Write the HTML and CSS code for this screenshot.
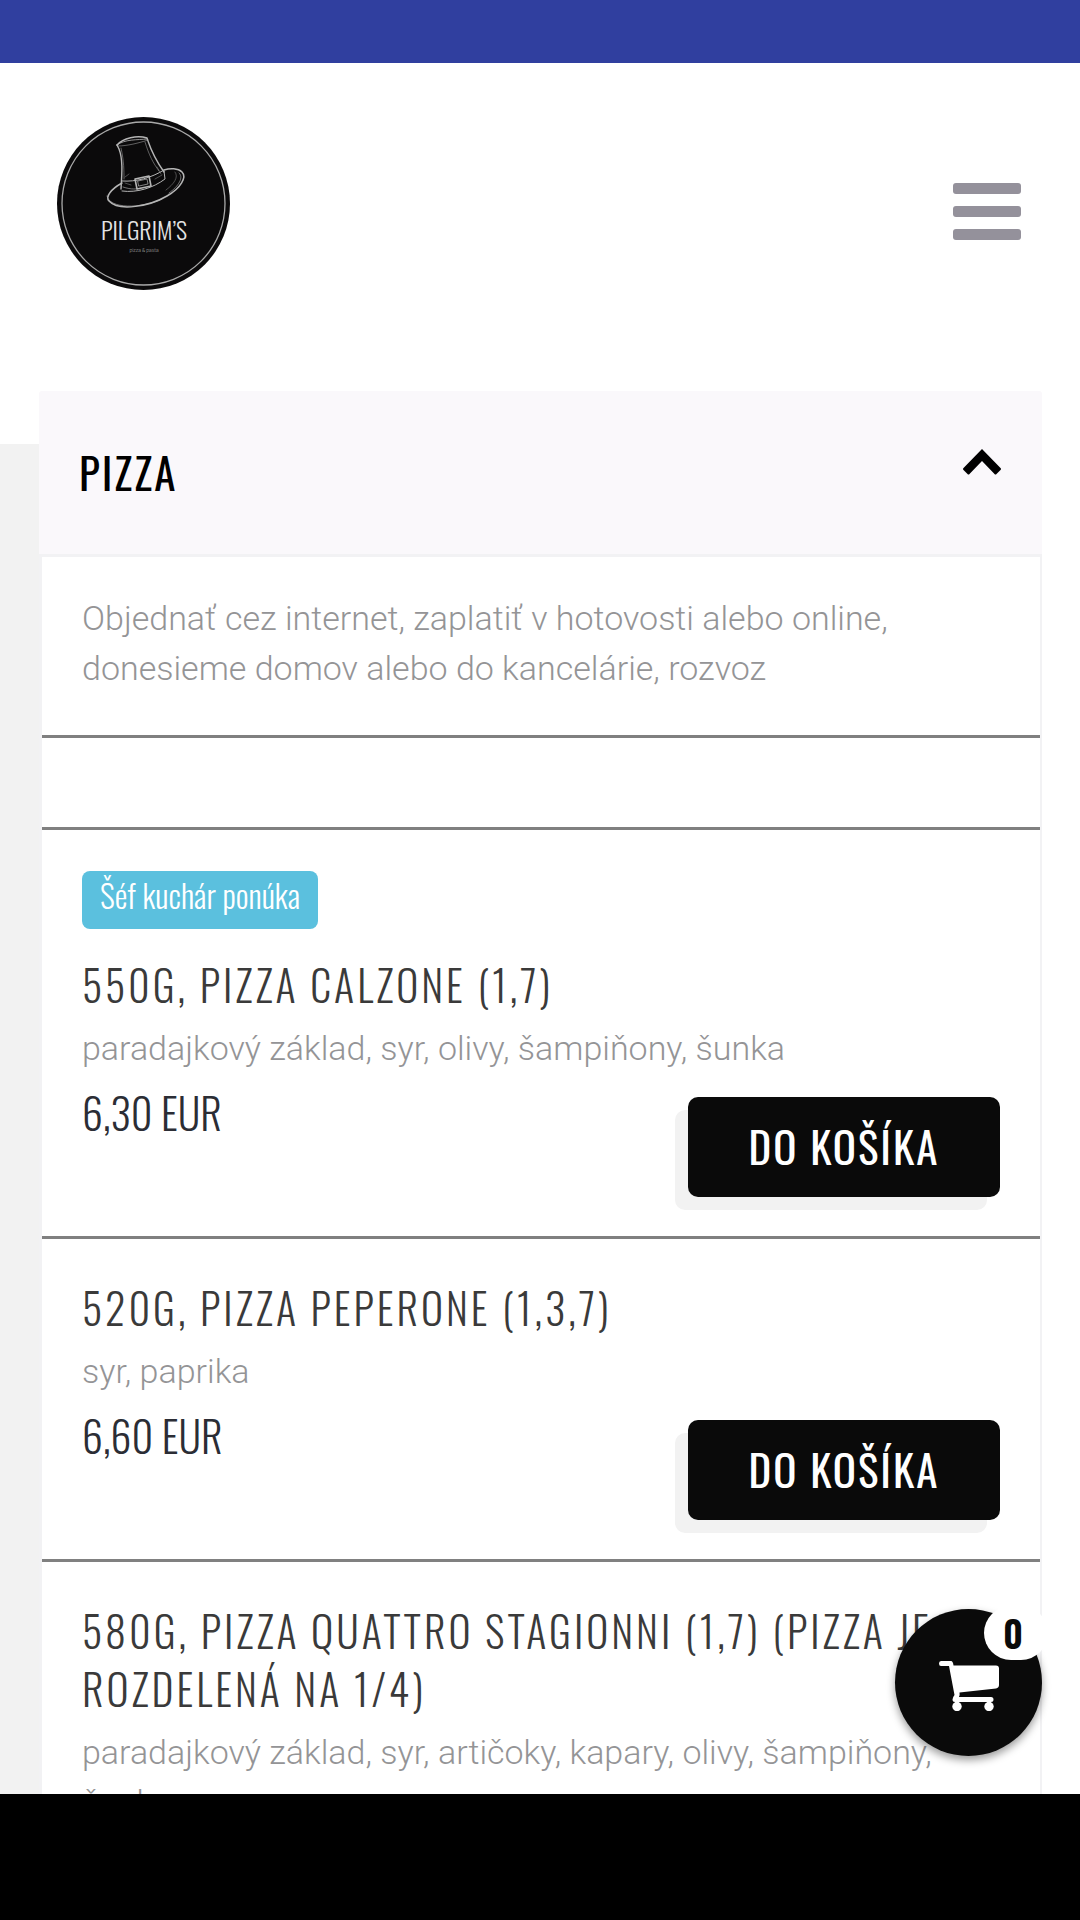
FILE: index.html
```
<!DOCTYPE html>
<html lang="sk">
<head>
    <meta charset="UTF-8">
    <meta name="viewport" content="width=device-width, initial-scale=1.0">
    <title>Pilgrim's - pizza &amp; pasta</title>
    <link rel="stylesheet" href="styles.css">
</head>
<body>

<div class="status-bar"></div>

<main class="page">
    <header class="header">
        <a href="#" class="logo" aria-label="Pilgrim's">
            <svg width="174" height="174" viewBox="0 0 174 174">
                <circle cx="86.5" cy="86.5" r="86.5" fill="#0b0a0b"/>
                <circle cx="86.5" cy="86.5" r="81.5" fill="none" stroke="#a9a9a9" stroke-width="1.3"/>
                <!-- hat -->
                <g fill="none" stroke="#b5b5b5" stroke-width="1" stroke-linecap="round" stroke-linejoin="round">
                    <path d="M60 28 C66 21 80 18 90 21 L91 24 C95 36 100 45 107 55" stroke-width="1.4"/>
                    <path d="M60 28 C68 22 80 23 90 22" opacity=".8"/>
                    <path d="M61 29 C70 29 82 26 91 23" opacity=".5"/>
                    <path d="M60 28 L62 32 C66 42 65 56 64 72" stroke-width="1.4"/>
                    <path d="M64 31 C67 44 67 54 67 62" opacity=".5"/>
                    <path d="M88 25 C92 38 96 46 102 54" opacity=".5"/>
                    <path d="M65 64 C79 65 94 61 107 53"/>
                    <path d="M65 74 C80 76 96 71 108 62 L107 54"/>
                    <path d="M66 70 C75 73 80 72 84 71" opacity=".6"/>
                    <path d="M78 62 L92 59 L94 69 L80 72 Z" stroke-width="1.6"/>
                    <path d="M81 64 L90 62 L91 67 L82 69 Z" opacity=".7"/>
                    <path d="M65 66 C54 72 48 80 52 84 C62 95 93 89 110 79 C124 71 130 60 125 55 C121 51 113 51 107 53" stroke-width="1.5"/>
                    <path d="M50 79 C52 92 84 92 105 82" opacity=".6"/>
                    <path d="M122 56 C127 60 122 69 112 76" opacity=".6"/>
                    <path d="M118 55 C122 60 117 67 109 73" opacity=".4"/>
                    <path d="M68 60 L72 57 M100 50 L104 57 M68 66 L74 68 M98 62 L105 58" opacity=".4"/>
                </g>
                <text x="87" y="123" class="logo-name">PILGRIM’S</text>
                <text x="87" y="135" class="logo-sub">pizza &amp; pasta</text>
            </svg>
        </a>
        <button class="menu-toggle" type="button" aria-label="Menu">
            <span class="bar"></span>
            <span class="bar"></span>
            <span class="bar"></span>
        </button>
    </header>

    <section class="offer">
        <div class="category">
            <button class="category-header" type="button">
                <span>PIZZA</span>
                <svg class="chevron" width="38" height="26" viewBox="0 0 38 26">
                    <path d="M19 0 L37.500 19 Q38.500 20 37.500 21 L33.500 25 Q32.500 26 31.500 25 L19 12 L6.500 25 Q5.500 26 4.500 25 L0.500 21 Q-0.500 20 0.500 19 Z"/>
                </svg>
            </button>

            <div class="category-body">
                <p class="intro">Objednať cez internet, zaplatiť v hotovosti alebo online, donesieme domov alebo do kancelárie, rozvoz</p>
                <div class="spacer"></div>

                <article class="item">
                    <span class="label">Šéf kuchár ponúka</span>
                    <h3>550G, PIZZA CALZONE (1,7)</h3>
                    <p class="desc">paradajkový základ, syr, olivy, šampiňony, šunka</p>
                    <div class="buy">
                        <span class="price">6,30 EUR</span>
                        <button class="btn" type="button">DO KOŠÍKA</button>
                    </div>
                </article>

                <article class="item">
                    <h3>520G, PIZZA PEPERONE (1,3,7)</h3>
                    <p class="desc">syr, paprika</p>
                    <div class="buy">
                        <span class="price">6,60 EUR</span>
                        <button class="btn" type="button">DO KOŠÍKA</button>
                    </div>
                </article>

                <article class="item">
                    <h3>580G, PIZZA QUATTRO STAGIONNI (1,7) (PIZZA JE ROZDELENÁ NA 1/4)</h3>
                    <p class="desc">paradajkový základ, syr, artičoky, kapary, olivy, šampiňony, šunka</p>
                </article>
            </div>
        </div>
    </section>

    <a href="#" class="cart" aria-label="Košík">
        <svg width="60" height="50" viewBox="0 0 60 50" fill="#fff">
            <path d="M2 0 H12 Q14 0 14.500 4.500 H57 Q60 4.500 60 7.500 V24 Q60 27 57 27.400 L20.500 31.500 Q21 34 20 36 H52 Q54.500 36 54.500 38.500 Q54.500 41 52 41 H16 Q13.500 41 13.500 38.500 Q13.500 36.500 15.500 34 L10 5 H2 Q0 5 0 2.500 Q0 0 2 0 Z"/>
            <circle cx="18" cy="45.500" r="4.700"/>
            <circle cx="50" cy="45.500" r="4.700"/>
        </svg>
        <span class="cart-count">0</span>
    </a>
</main>

<div class="nav-bar"></div>

</body>
</html>
```
FILE: styles.css
```
* {
    box-sizing: border-box;
}

body {
    margin: 0;
    height: 100vh;
    display: flex;
    flex-direction: column;
    background-color: #fff;
    font-family: Roboto, sans-serif;
    font-weight: 300;
}

h3, p {
    margin: 0;
}

button {
    border: 0;
    cursor: pointer;
}

.status-bar {
    flex: none;
    height: 63px;
    background-color: #303f9f;
}

.nav-bar {
    flex: none;
    height: 126px;
    background-color: #000;
}

.page {
    position: relative;
    flex: 1;
    min-height: 0;
    overflow: hidden;
}

/* header */
.header {
    display: flex;
    justify-content: space-between;
    align-items: flex-start;
    height: 381px;
    padding: 54px 59px 0 57px;
}

.logo svg {
    display: block;
}

.logo-name {
    font-family: Oswald, sans-serif;
    font-size: 24px;
    font-weight: 300;
    text-anchor: middle;
    fill: #e4e4e4;
}

.logo-sub {
    font-family: Roboto, sans-serif;
    font-size: 5px;
    text-anchor: middle;
    fill: #b0b0b0;
}

.menu-toggle {
    display: flex;
    flex-direction: column;
    gap: 12px;
    margin-top: 66px;
    padding: 0;
    background: none;
}

.bar {
    width: 68px;
    height: 11px;
    border-radius: 3px;
    background-color: #94919b;
}

/* offer list */
.offer {
    padding: 0 38px 0 39px;
    background: linear-gradient(to right, #f2f2f2 50%, #fff 50%);
}

.category {
    position: relative;
    top: -53px;
}

.category-header {
    display: flex;
    justify-content: space-between;
    align-items: flex-start;
    width: 100%;
    padding: 52px 41px 53px 40px;
    border-radius: 3px 3px 0 0;
    background-color: #faf8fb;
    color: #000;
    font: 400 43px/58px Oswald, sans-serif;
    letter-spacing: 2px;
}

.chevron {
    margin-top: 6px;
}

.category-body {
    border: 3px solid #f2f2f4;
    border-right-width: 2px;
    background-color: #fff;
}

.intro,
.desc {
    color: #949496;
    font-size: 34px;
    line-height: 50px;
}

.intro {
    padding: 36px 40px 42px;
}

.spacer {
    height: 92px;
    border-top: 3px solid #808080;
}

.item {
    padding: 39px 40px;
    border-top: 3px solid #808080;
}

.label {
    display: table;
    margin: 2px 0 26px;
    padding: 0 18px 10px;
    border-radius: 8px;
    background-color: #5bc0de;
    color: #fff;
    font: 300 32px/48px Oswald, sans-serif;
}

.item h3 {
    margin-bottom: 10px;
    color: #3a3a3a;
    font: 300 42px/58px Oswald, sans-serif;
    letter-spacing: 3px;
}

.desc {
    margin-bottom: 10px;
}

.buy {
    display: flex;
    justify-content: space-between;
    align-items: flex-start;
}

.price {
    color: #2b2d35;
    font: 300 42px/58px Oswald, sans-serif;
}

.btn {
    min-width: 312px;
    margin-top: 14px;
    padding: 20px 40px 22px;
    border-radius: 10px;
    background-color: #0a0a0a;
    box-shadow: -13px 13px 0 #f2f2f2;
    color: #fff;
    font: 400 43px/58px Oswald, sans-serif;
    letter-spacing: 2px;
}

/* floating cart */
.cart {
    position: absolute;
    right: 38px;
    bottom: 38px;
    display: flex;
    justify-content: center;
    align-items: center;
    width: 147px;
    height: 147px;
    padding-top: 6px;
    border-radius: 50%;
    background-color: #0a0a0a;
    box-shadow: 0 4px 8px rgba(0, 0, 0, 0.4);
}

.cart-count {
    position: absolute;
    top: -3px;
    right: -6px;
    width: 64px;
    padding-right: 6px;
    border-radius: 27px;
    background-color: #fff;
    color: #0a0a0a;
    font: 600 37px/54px Oswald, sans-serif;
    text-align: center;
}
```
